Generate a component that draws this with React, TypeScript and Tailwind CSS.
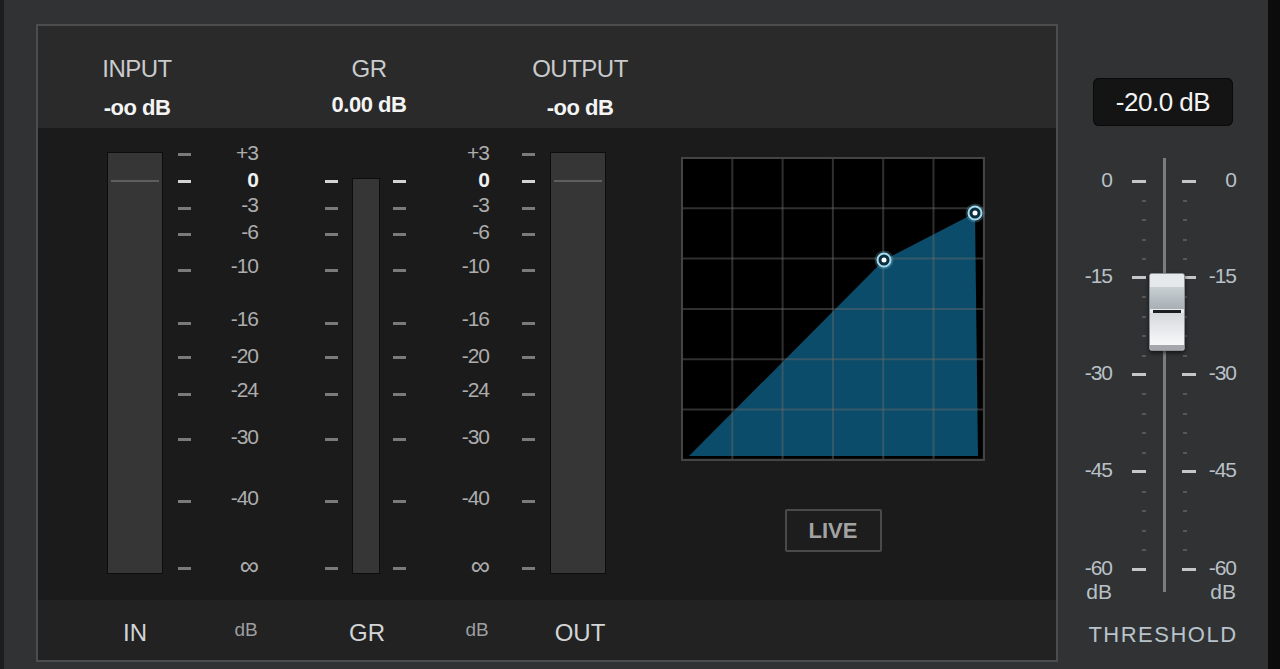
import React from 'react';

const font = { fontFamily: '"Liberation Sans", Arial, sans-serif' };

// meter scale, y offsets measured from the top of the meters (page y 152)
const scale = [
  { label: '+3', tick: 2, text: 1 },
  { label: '0', tick: 29, text: 28, hot: true },
  { label: '-3', tick: 56, text: 53 },
  { label: '-6', tick: 82, text: 80 },
  { label: '-10', tick: 118, text: 114 },
  { label: '-16', tick: 171, text: 167 },
  { label: '-20', tick: 205, text: 204 },
  { label: '-24', tick: 242, text: 238 },
  { label: '-30', tick: 287, text: 285 },
  { label: '-40', tick: 349, text: 346 },
  { label: '∞', tick: 416, text: 414 },
];

const Meter = ({ width, top = 0 }: { width: number; top?: number }) => (
  <div className="relative h-[422px]" style={{ width }}>
    <div
      className="absolute left-0 right-0 bottom-0 border border-[#0d0d0d] bg-[#363636]"
      style={{ top }}
    >
      {top === 0 && <div className="mx-[3px] mt-[27px] h-[2px] bg-[#5e5e5e]" />}
    </div>
  </div>
);

const Ticks = ({ skipTop = false }: { skipTop?: boolean }) => (
  <div className="relative h-[422px] w-[13px]">
    {scale
      .filter((s) => !(skipTop && s.label === '+3'))
      .map((s) => (
        <div
          key={s.label}
          className={`absolute left-0 h-[3px] w-full ${s.hot ? 'bg-[#d4d4d4]' : 'bg-[#7a7a7a]'}`}
          style={{ top: s.tick - 1 }}
        />
      ))}
  </div>
);

const Numbers = ({ width }: { width: number }) => (
  <div className="relative h-[422px]" style={{ width }}>
    {scale.map((s) => (
      <span
        key={s.label}
        className={`absolute right-0 leading-[20px] tracking-[-1px] ${
          s.hot ? 'font-bold text-[#f0f0f0]' : 'text-[#adadad]'
        } ${s.label === '∞' ? 'text-[27px]' : 'text-[21px]'}`}
        style={{ top: s.text - 10 }}
      >
        {s.label}
      </span>
    ))}
  </div>
);

const Curve = () => {
  const lines = [0, 1, 2, 3, 4, 5, 6].map((i) => 1 + i * 50.3);
  return (
    <svg width="304" height="304" viewBox="0 0 304 304" className="block">
      <rect x="0" y="0" width="304" height="304" fill="#000" />
      <polygon points="8,299 203,103 294,56 297,299" fill="#0a4c69" />
      {lines.map((p) => (
        <g key={p}>
          <line x1={p} y1="0" x2={p} y2="304" stroke="#6b6b6b" strokeOpacity="0.45" strokeWidth="2" />
          <line x1="0" y1={p} x2="304" y2={p} stroke="#6b6b6b" strokeOpacity="0.45" strokeWidth="2" />
        </g>
      ))}
      <rect x="1" y="1" width="302" height="302" fill="none" stroke="#444444" strokeWidth="2" />
      {[
        [203, 103],
        [294, 56],
      ].map(([cx, cy]) => (
        <g key={cx}>
          <circle cx={cx} cy={cy} r="9.5" fill="#7fc4dd" fillOpacity="0.25" />
          <circle cx={cx} cy={cy} r="6.5" fill="#0a2e3d" stroke="#a6dcef" strokeWidth="2" />
          <circle cx={cx} cy={cy} r="2.5" fill="#ffffff" />
        </g>
      ))}
    </svg>
  );
};

const majors = [
  { label: '0', y: 31 },
  { label: '-15', y: 127 },
  { label: '-30', y: 224 },
  { label: '-45', y: 321 },
  { label: '-60', y: 419 },
];

const Fader = () => {
  const minors: number[] = [];
  for (let i = 0; i < 4; i++) {
    for (let k = 1; k < 5; k++) {
      minors.push(majors[i].y + ((majors[i + 1].y - majors[i].y) * k) / 5);
    }
  }
  return (
    <div className="relative h-[460px] w-[208px]">
      <div className="absolute left-[104px] top-[8px] h-[434px] w-[3px] bg-[#7b7d7f]" />
      {majors.map((m) => (
        <React.Fragment key={m.label}>
          <div className="absolute left-[73px] h-[3px] w-[14px] bg-[#c4c6c8]" style={{ top: m.y - 1 }} />
          <div className="absolute left-[123px] h-[3px] w-[14px] bg-[#c4c6c8]" style={{ top: m.y - 1 }} />
          <span
            className="absolute right-[155px] text-[21px] leading-[20px] tracking-[-1px] text-[#b9c1c7]"
            style={{ top: m.y - 11 }}
          >
            {m.label}
          </span>
          <span
            className="absolute right-[31px] text-[21px] leading-[20px] tracking-[-1px] text-[#b9c1c7]"
            style={{ top: m.y - 11 }}
          >
            {m.label}
          </span>
        </React.Fragment>
      ))}
      {minors.map((y) => (
        <React.Fragment key={y}>
          <div className="absolute left-[83px] h-[2px] w-[4px] bg-[#555759]" style={{ top: y }} />
          <div className="absolute left-[124px] h-[2px] w-[4px] bg-[#555759]" style={{ top: y }} />
        </React.Fragment>
      ))}
      <span className="absolute right-[155px] top-[432px] text-[21px] leading-[20px] text-[#b9c1c7]">dB</span>
      <span className="absolute right-[31px] top-[432px] text-[21px] leading-[20px] text-[#b9c1c7]">dB</span>
      {/* knob */}
      <div className="absolute left-[90px] top-[123px] flex h-[78px] w-[36px] flex-col overflow-hidden rounded-[3px] border border-[#8c9094] bg-[#e8eaec] shadow-[0_2px_4px_rgba(0,0,0,0.6)]">
        <div className="h-[13px] bg-[#e6e9eb]" />
        <div className="h-[22px] bg-gradient-to-b from-[#c9cfd3] to-[#a8b0b6]" />
        <div className="mx-[3px] mt-[1px] h-[3px] bg-[#1c1e20]" />
        <div className="flex-1 bg-gradient-to-b from-[#d6dadd] to-[#f7f8f9]" />
        <div className="h-[5px] bg-[#a4a8ac]" />
      </div>
    </div>
  );
};

export default function App() {
  return (
    <div className="flex h-[669px] w-[1280px] overflow-hidden bg-[#303234]" style={font}>
      <div className="w-[4px] bg-[#1c1d1e]" />
      <div className="pl-[32px] pt-[24px]">
        <div className="flex h-[638px] w-[1022px] flex-col border-2 border-[#4b4d4f] bg-[#1b1b1b]">
          {/* header */}
          <div className="flex h-[102px] bg-[#2a2a2a] pl-[39px] pt-[29px]">
            <div className="flex w-[120px] flex-col items-center">
              <span className="text-[24px] leading-[28px] tracking-[-0.5px] text-[#c9cbcd]">INPUT</span>
              <span className="mt-[12px] text-[22px] font-bold leading-[26px] tracking-[-0.5px] text-[#f4f4f4]">-oo dB</span>
            </div>
            <div className="ml-[112px] flex w-[120px] flex-col items-center">
              <span className="text-[24px] leading-[28px] tracking-[-0.5px] text-[#c9cbcd]">GR</span>
              <span className="mt-[9px] text-[22px] font-bold leading-[26px] tracking-[-0.5px] text-[#f4f4f4]">0.00 dB</span>
            </div>
            <div className="ml-[91px] flex w-[120px] flex-col items-center">
              <span className="text-[24px] leading-[28px] tracking-[-0.5px] text-[#c9cbcd]">OUTPUT</span>
              <span className="mt-[12px] text-[22px] font-bold leading-[26px] tracking-[-0.5px] text-[#f4f4f4]">-oo dB</span>
            </div>
          </div>
          {/* meters + transfer curve */}
          <div className="flex h-[472px] items-start pl-[69px] pt-[24px]">
            <Meter width={56} />
            <div className="ml-[15px]">
              <Ticks />
            </div>
            <Numbers width={67} />
            <div className="ml-[67px]">
              <Ticks skipTop />
            </div>
            <div className="ml-[14px]">
              <Meter width={28} top={26} />
            </div>
            <div className="ml-[13px]">
              <Ticks skipTop />
            </div>
            <Numbers width={83} />
            <div className="ml-[33px]">
              <Ticks />
            </div>
            <div className="ml-[15px]">
              <Meter width={56} />
            </div>
            <div className="ml-[75px] mt-[5px] flex flex-col items-center">
              <Curve />
              <button className="mt-[48px] flex h-[43px] w-[97px] items-center justify-center rounded-[2px] border-2 border-[#4a4a4a] bg-[#1d1d1d] text-[22px] font-bold text-[#a3a3a3]">
                LIVE
              </button>
            </div>
          </div>
          {/* footer */}
          <div className="flex flex-1 items-center bg-[#222222] pl-[57px]">
            <span className="mt-[6px] w-[80px] text-center text-[24px] text-[#d2d4d6]">IN</span>
            <span className="ml-[41px] w-[60px] text-center text-[19px] text-[#9c9ea0]">dB</span>
            <span className="ml-[51px] mt-[6px] w-[80px] text-center text-[24px] text-[#d2d4d6]">GR</span>
            <span className="ml-[40px] w-[60px] text-center text-[19px] text-[#9c9ea0]">dB</span>
            <span className="ml-[33px] mt-[6px] w-[80px] text-center text-[24px] text-[#d2d4d6]">OUT</span>
          </div>
        </div>
      </div>
      {/* threshold */}
      <div className="flex w-[210px] flex-col items-center pt-[78px]">
        <div className="flex h-[48px] w-[140px] items-center justify-center rounded-[6px] bg-[#141414] text-[26px] leading-none tracking-[-0.5px] text-[#f2f2f2] shadow-[inset_0_0_0_1px_#0a0a0a]">
          -20.0 dB
        </div>
        <div className="mt-[24px]">
          <Fader />
        </div>
        <span className="mt-[11px] text-[22px] leading-[28px] tracking-[1.5px] text-[#b9c3ca]">THRESHOLD</span>
      </div>
      <div className="flex-1 bg-[#0c0c0c]" />
    </div>
  );
}
